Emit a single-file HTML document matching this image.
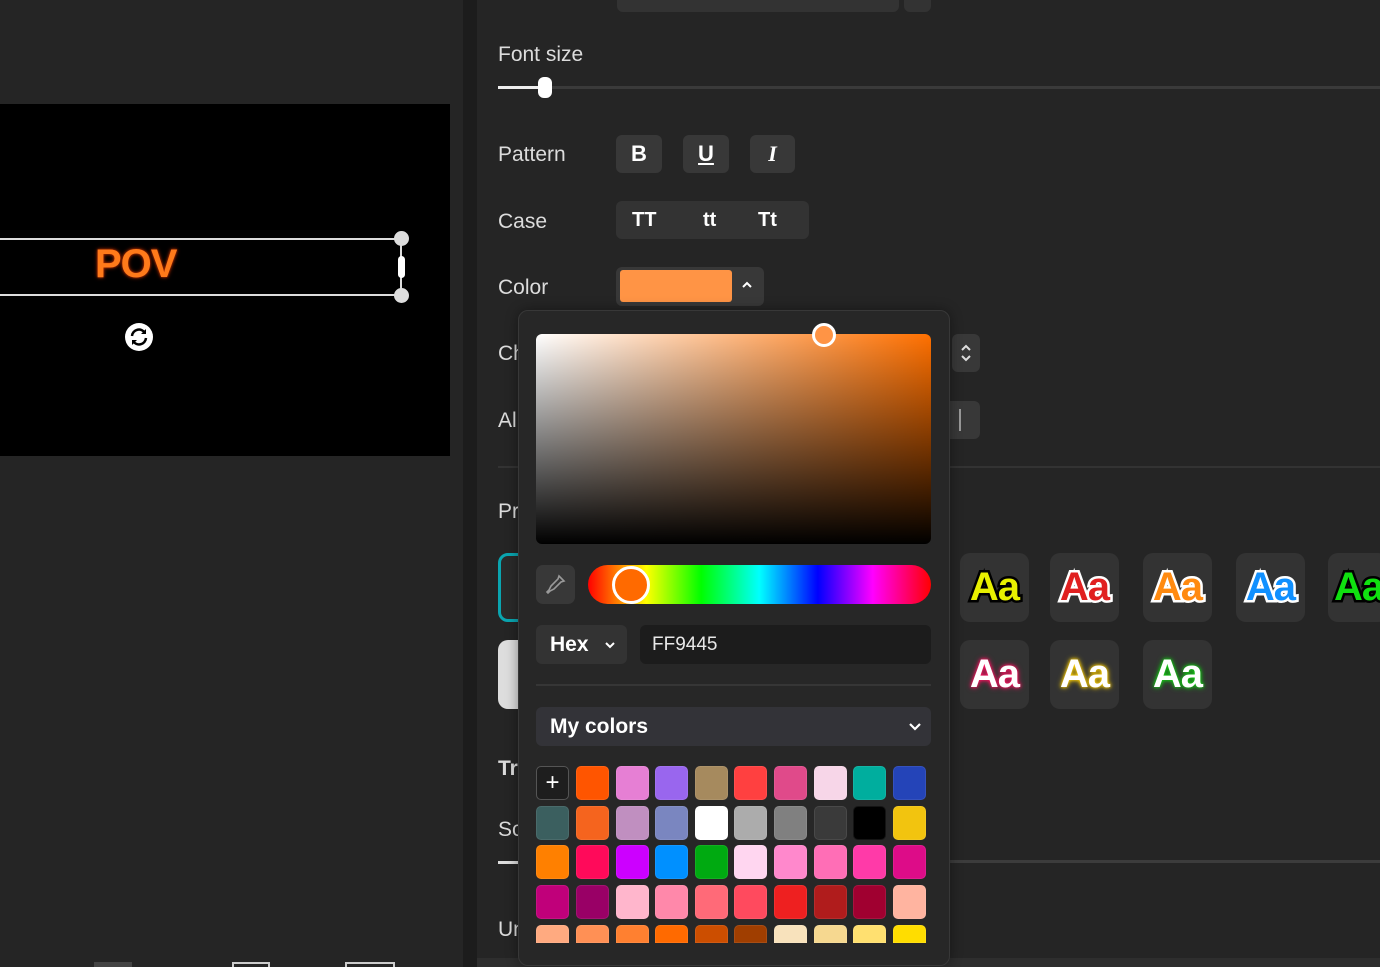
<!DOCTYPE html>
<html><head><meta charset="utf-8"><style>
*{margin:0;padding:0;box-sizing:border-box}
html,body{width:1380px;height:967px;overflow:hidden}
body{background:#252525;font-family:"Liberation Sans","DejaVu Sans",sans-serif;color:#e6e6e6;position:relative}
.a{position:absolute}
.lbl{position:absolute;left:498px;font-size:21px;color:#dcdcdc}
.btn{position:absolute;background:#383838;border-radius:6px;color:#fff;font-weight:bold;display:flex;align-items:center;justify-content:center}
.sw{position:absolute;width:33px;height:34px;border-radius:5px;border:1px solid rgba(255,255,255,0.08)}
.aa{position:absolute;width:69px;height:69px;background:#333;border-radius:10px;display:flex;align-items:center;justify-content:center;font-weight:bold;font-size:40px;letter-spacing:-1px;paint-order:stroke fill}
</style></head><body>
<!-- left -->
<div class="a" style="left:0;top:104px;width:450px;height:352px;background:#000"></div>
<div class="a" style="left:0;top:238px;width:402px;height:2px;background:#ddd"></div>
<div class="a" style="left:0;top:294px;width:402px;height:2px;background:#ddd"></div>
<div class="a" style="left:400px;top:238px;width:2px;height:58px;background:#ddd"></div>
<div class="a" style="left:394px;top:231px;width:15px;height:15px;border-radius:50%;background:#ddd"></div>
<div class="a" style="left:394px;top:288px;width:15px;height:15px;border-radius:50%;background:#ddd"></div>
<div class="a" style="left:398px;top:256px;width:7px;height:22px;border-radius:4px;background:#fff"></div>
<div class="a" style="left:95px;top:242px;font-size:40px;font-weight:bold;color:#ff7a1a;text-shadow:0 0 4px #a02800,0 0 2px #c03000;letter-spacing:-1px">POV</div>
<svg class="a" style="left:124px;top:322px" width="30" height="30" viewBox="0 0 30 30"><circle cx="15" cy="15" r="14" fill="#fff"/><path d="M8 14a7 7 0 0 1 13-3M22 16a7 7 0 0 1-13 3" stroke="#000" stroke-width="2.5" fill="none"/><path d="M22 7v5h-5z M8 23v-5h5z" fill="#000"/></svg>
<div class="a" style="left:463px;top:0;width:14px;height:967px;background:#1c1c1c"></div>
<div class="a" style="left:232px;top:962px;width:38px;height:5px;border:2px solid #ccc;border-bottom:none"></div>
<div class="a" style="left:345px;top:962px;width:50px;height:5px;border:2px solid #ccc;border-bottom:none"></div>
<div class="a" style="left:94px;top:962px;width:38px;height:5px;background:#444"></div>
<!-- right -->
<div class="a" style="left:617px;top:-10px;width:282px;height:22px;background:#333;border-radius:6px"></div>
<div class="a" style="left:904px;top:-10px;width:27px;height:22px;background:#333;border-radius:6px"></div>
<div class="lbl" style="top:43px">Font size</div>
<div class="a" style="left:498px;top:86px;width:882px;height:3px;background:#3a3a3a"></div>
<div class="a" style="left:498px;top:86px;width:46px;height:3px;background:#eee"></div>
<div class="a" style="left:538px;top:77px;width:14px;height:21px;border-radius:6px;background:#fff"></div>
<div class="lbl" style="top:143px">Pattern</div>
<div class="btn" style="left:616px;top:135px;width:46px;height:38px;font-size:22px">B</div>
<div class="btn" style="left:683px;top:135px;width:46px;height:38px;font-size:22px;text-decoration:underline">U</div>
<div class="btn" style="left:750px;top:135px;width:45px;height:38px;font-size:22px;font-family:'Liberation Serif',serif;font-style:italic">I</div>
<div class="lbl" style="top:210px">Case</div>
<div class="a" style="left:616px;top:201px;width:193px;height:38px;border-radius:6px;background:#333;font-size:20px;font-weight:bold;color:#fff">
<span class="a" style="left:16px;top:8px">TT</span><span class="a" style="left:87px;top:8px">tt</span><span class="a" style="left:142px;top:8px">Tt</span></div>
<div class="lbl" style="top:276px">Color</div>
<div class="a" style="left:616px;top:267px;width:148px;height:39px;background:#383838;border-radius:6px"></div>
<div class="a" style="left:620px;top:270px;width:112px;height:32px;background:#ff9445;border-radius:3px"></div>
<svg class="a" style="left:741px;top:281px" width="12" height="8" viewBox="0 0 12 8"><path d="M2 6l4-4 4 4" stroke="#fff" stroke-width="2" fill="none"/></svg>
<div class="lbl" style="top:342px">Ch</div>
<div class="lbl" style="top:409px">Al</div>
<div class="btn" style="left:952px;top:334px;width:28px;height:38px"><svg width="14" height="22" viewBox="0 0 14 22"><path d="M3 8l4-4 4 4M3 14l4 4 4-4" stroke="#ddd" stroke-width="2" fill="none"/></svg></div>
<div class="btn" style="left:940px;top:401px;width:40px;height:38px"><div style="width:2px;height:22px;background:#999"></div></div>
<div class="a" style="left:498px;top:466px;width:882px;height:2px;background:#333"></div>
<div class="lbl" style="top:500px">Pr</div>
<div class="a" style="left:498px;top:553px;width:40px;height:69px;border:3px solid #0aa5b0;border-radius:10px;background:#2a2a2a"></div>
<div class="a" style="left:498px;top:640px;width:40px;height:69px;border-radius:10px;background:#ddd"></div>
<div class="lbl" style="top:757px;font-weight:bold">Tr</div>
<div class="lbl" style="top:818px">Sc</div>
<div class="a" style="left:498px;top:861px;width:20px;height:3px;background:#ddd"></div>
<div class="a" style="left:950px;top:860px;width:430px;height:3px;background:#3c3c3c"></div>
<div class="lbl" style="top:918px">Un</div>
<div class="a" style="left:477px;top:958px;width:903px;height:9px;background:#2e2e2e"></div>
<div class="aa" style="left:960px;top:553px;color:#e8f000;-webkit-text-stroke:5px #000">Aa</div>
<div class="aa" style="left:1050px;top:553px;color:#e02020;-webkit-text-stroke:5px #fff">Aa</div>
<div class="aa" style="left:1143px;top:553px;color:#ff8a10;-webkit-text-stroke:5px #fff">Aa</div>
<div class="aa" style="left:1236px;top:553px;color:#1090ff;-webkit-text-stroke:5px #fff">Aa</div>
<div class="aa" style="left:1328px;top:553px;width:60px;justify-content:flex-start;padding-left:6px;overflow:hidden;color:#10e010;-webkit-text-stroke:5px #000">Aa</div>
<div class="aa" style="left:960px;top:640px;color:#fff;text-shadow:0 0 6px #ff1060,0 0 3px #ff1060">Aa</div>
<div class="aa" style="left:1050px;top:640px;color:#fff;text-shadow:0 0 6px #ffd000,0 0 3px #ffd000">Aa</div>
<div class="aa" style="left:1143px;top:640px;color:#fff;text-shadow:0 0 6px #10d010,0 0 3px #10d010">Aa</div>
<!-- popup -->
<div class="a" style="left:518px;top:310px;width:432px;height:656px;background:#272727;border:1px solid #383838;border-radius:10px;box-shadow:0 0 12px rgba(0,0,0,.4)"></div>
<div class="a" style="left:536px;top:334px;width:395px;height:210px;border-radius:6px;background:linear-gradient(to bottom,rgba(0,0,0,0),#000),linear-gradient(to right,#fff,#ff7000)"></div>
<div class="a" style="left:812px;top:323px;width:24px;height:24px;border-radius:50%;background:#ff9445;border:3px solid #fff"></div>
<div class="a" style="left:536px;top:565px;width:39px;height:39px;border-radius:7px;background:#383838"></div>
<svg class="a" style="left:544px;top:573px" width="23" height="23" viewBox="0 0 23 23"><path d="M15 3l5 5-3 1-7 7-4 2-2 2-1-1 2-2 2-4 7-7z" fill="none" stroke="#999" stroke-width="1.6"/></svg>
<div class="a" style="left:588px;top:565px;width:343px;height:39px;border-radius:20px;background:linear-gradient(to right,#f00,#ff0 17%,#0f0 33%,#0ff 50%,#00f 67%,#f0f 83%,#f00)"></div>
<div class="a" style="left:612px;top:566px;width:38px;height:38px;border-radius:50%;background:#ff6a00;border:3px solid #fff"></div>
<div class="a" style="left:536px;top:625px;width:91px;height:39px;border-radius:6px;background:#333;font-weight:bold;font-size:21px;color:#fff;padding:8px 0 0 14px">Hex</div>
<svg class="a" style="left:604px;top:641px" width="12" height="8" viewBox="0 0 12 8"><path d="M2 2l4 4 4-4" stroke="#fff" stroke-width="2" fill="none"/></svg>
<div class="a" style="left:640px;top:625px;width:291px;height:39px;border-radius:6px;background:#1c1c1c;font-size:19px;color:#e8e8e8;padding:9px 0 0 12px">FF9445</div>
<div class="a" style="left:536px;top:684px;width:395px;height:2px;background:#363636"></div>
<div class="a" style="left:536px;top:707px;width:395px;height:39px;border-radius:6px;background:#333338;font-weight:bold;font-size:21px;color:#fff;padding:8px 0 0 14px">My colors</div>
<svg class="a" style="left:908px;top:722px" width="14" height="10" viewBox="0 0 14 10"><path d="M2 2l5 5 5-5" stroke="#fff" stroke-width="2.2" fill="none"/></svg>
<div class="sw" style="left:536px;top:766px;border:1px solid #555;background:#1e1e1e;color:#fff;font-size:24px;display:flex;align-items:center;justify-content:center">+</div>
<div class="sw" style="left:576px;top:766px;background:#ff5500"></div><div class="sw" style="left:616px;top:766px;background:#e67fd4"></div><div class="sw" style="left:655px;top:766px;background:#9966ee"></div><div class="sw" style="left:695px;top:766px;background:#a68a5e"></div><div class="sw" style="left:734px;top:766px;background:#ff4040"></div><div class="sw" style="left:774px;top:766px;background:#e04a8a"></div><div class="sw" style="left:814px;top:766px;background:#f7d6e8"></div><div class="sw" style="left:853px;top:766px;background:#00ae9e"></div><div class="sw" style="left:893px;top:766px;background:#2444b8"></div>
<div class="sw" style="left:536px;top:806px;background:#3b5f5f"></div><div class="sw" style="left:576px;top:806px;background:#f5641e"></div><div class="sw" style="left:616px;top:806px;background:#c08fc0"></div><div class="sw" style="left:655px;top:806px;background:#7a86c0"></div><div class="sw" style="left:695px;top:806px;background:#fff"></div><div class="sw" style="left:734px;top:806px;background:#acacac"></div><div class="sw" style="left:774px;top:806px;background:#808080"></div><div class="sw" style="left:814px;top:806px;background:#3a3a3a"></div><div class="sw" style="left:853px;top:806px;background:#000"></div><div class="sw" style="left:893px;top:806px;background:#f2c40f"></div>
<div class="sw" style="left:536px;top:845px;background:#ff8000"></div><div class="sw" style="left:576px;top:845px;background:#ff0a5a"></div><div class="sw" style="left:616px;top:845px;background:#cc00ff"></div><div class="sw" style="left:655px;top:845px;background:#0090ff"></div><div class="sw" style="left:695px;top:845px;background:#00aa11"></div><div class="sw" style="left:734px;top:845px;background:#ffd6f0"></div><div class="sw" style="left:774px;top:845px;background:#ff88cc"></div><div class="sw" style="left:814px;top:845px;background:#ff6eb6"></div><div class="sw" style="left:853px;top:845px;background:#ff3aa8"></div><div class="sw" style="left:893px;top:845px;background:#dd0c88"></div>
<div class="sw" style="left:536px;top:885px;background:#c0007a"></div><div class="sw" style="left:576px;top:885px;background:#990066"></div><div class="sw" style="left:616px;top:885px;background:#ffb6cc"></div><div class="sw" style="left:655px;top:885px;background:#ff88aa"></div><div class="sw" style="left:695px;top:885px;background:#ff6a78"></div><div class="sw" style="left:734px;top:885px;background:#ff4a5e"></div><div class="sw" style="left:774px;top:885px;background:#ee2020"></div><div class="sw" style="left:814px;top:885px;background:#b01c1c"></div><div class="sw" style="left:853px;top:885px;background:#a00030"></div><div class="sw" style="left:893px;top:885px;background:#ffb4a0"></div>
<div class="sw" style="left:536px;top:925px;height:18px;border-radius:5px 5px 0 0;background:#ffaa80"></div><div class="sw" style="left:576px;top:925px;height:18px;border-radius:5px 5px 0 0;background:#ff9055"></div><div class="sw" style="left:616px;top:925px;height:18px;border-radius:5px 5px 0 0;background:#ff8030"></div><div class="sw" style="left:655px;top:925px;height:18px;border-radius:5px 5px 0 0;background:#ff6a00"></div><div class="sw" style="left:695px;top:925px;height:18px;border-radius:5px 5px 0 0;background:#cc4e00"></div><div class="sw" style="left:734px;top:925px;height:18px;border-radius:5px 5px 0 0;background:#a03e00"></div><div class="sw" style="left:774px;top:925px;height:18px;border-radius:5px 5px 0 0;background:#f8e2bc"></div><div class="sw" style="left:814px;top:925px;height:18px;border-radius:5px 5px 0 0;background:#f6d890"></div><div class="sw" style="left:853px;top:925px;height:18px;border-radius:5px 5px 0 0;background:#ffe070"></div><div class="sw" style="left:893px;top:925px;height:18px;border-radius:5px 5px 0 0;background:#ffdd00"></div>
</body></html>
